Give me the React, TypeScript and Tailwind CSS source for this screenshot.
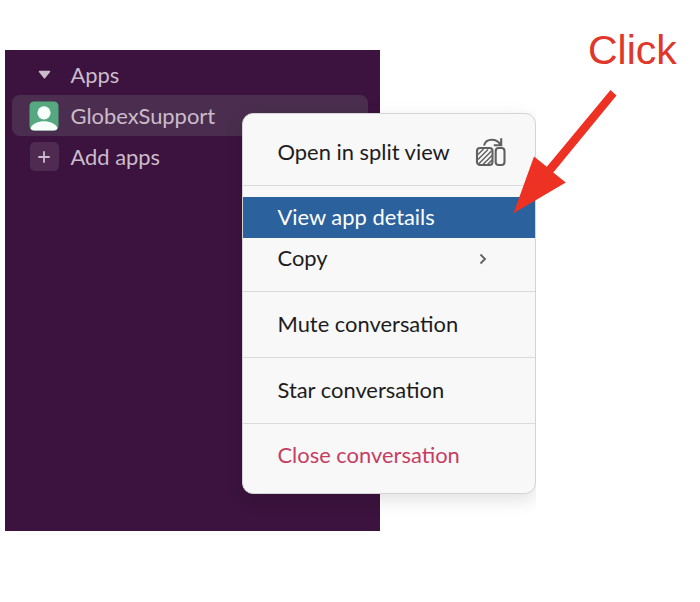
import type { ReactNode } from "react";

function SidebarRow({ icon, label, active = false }: { icon: ReactNode; label: string; active?: boolean }) {
  return (
    <div className={`mr-[12px] ml-[7px] flex h-[41px] items-center rounded-[8px] pl-[17px] ${active ? "bg-[#4b2e4f]" : ""}`}>
      <span className="flex size-[30px] shrink-0 items-center justify-center">{icon}</span>
      <span className="ml-[11.500px] whitespace-nowrap">{label}</span>
    </div>
  );
}

function Avatar() {
  return (
    <svg className="size-[30px]" viewBox="0 0 30 30">
      <rect x="0.5" y="0.5" width="29" height="29" rx="4.5" fill="#55a880" />
      <circle cx="15" cy="11.8" r="6.6" fill="#f7fffb" />
      <path d="M1.5 27.2C3.5 22.5 9 20.3 15 20.3s11.500 2.200 13.500 6.900Q27.700 29.500 25 29.500H5Q2.300 29.500 1.500 27.200Z" fill="#f7fffb" />
    </svg>
  );
}

function SplitViewIcon() {
  return (
    <svg className="h-[30px] w-[31px]" viewBox="0 0 31 30" fill="none" stroke="#616061" strokeWidth="2.1">
      <rect x="2" y="11" width="15.500" height="17" rx="3" />
      <rect x="20.700" y="11" width="8.800" height="17" rx="3" />
      <path d="M3 17.500l5.500-5.500M3 22.500L13 12.500M3.500 27L16.500 14M8 27.500L17 18.500M12.500 27.500L17 23" strokeWidth="1.500" />
      <path d="M9 8.500C10 5 13 2.800 16.700 2.800c4 0 6.800 1.800 8.800 4.700M26.200 1.200v7.100h-7.400" />
    </svg>
  );
}

function MenuItem({ label, icon, className = "" }: { label: string; icon?: ReactNode; className?: string }) {
  return (
    <div className={`flex h-[41px] items-center justify-between pb-px pl-[34.500px] ${className}`}>
      <span className="whitespace-nowrap">{label}</span>
      {icon}
    </div>
  );
}

function Divider() {
  return <div className="mt-[12px] mb-[11.700px] h-px bg-[#dadada]" />;
}

export default function App() {
  return (
    <div className="relative h-[602px] w-[700px] overflow-hidden bg-white pt-[50px] pl-[5px] font-['Lato',sans-serif] text-[21.900px] leading-[28px]">
      <div className="relative h-[481px] w-[531px] overflow-hidden">
        <div className="h-full w-[375px] bg-[#3b133e] pt-[4px] text-[#cbbccb]">
          <SidebarRow
            label="Apps"
            icon={
              <svg className="h-[9px] w-[13px]" viewBox="0 0 13 9">
                <path d="M1.500 1.500h10L6.500 7.800Z" fill="#cbbccb" stroke="#cbbccb" strokeWidth="1.500" strokeLinejoin="round" />
              </svg>
            }
          />
          <SidebarRow label="GlobexSupport" active icon={<Avatar />} />
          <SidebarRow
            label="Add apps"
            icon={
              <span className="flex size-[29px] items-center justify-center rounded-[5px] bg-[#4f2b52]">
                <svg className="size-[12px]" viewBox="0 0 12 12" stroke="#cbbccb" strokeWidth="1.800" strokeLinecap="round">
                  <path d="M6 1v10M1 6h10" />
                </svg>
              </span>
            }
          />
        </div>
        <div className="absolute top-[63px] left-[237px] h-[381px] w-[294px] rounded-[11px] border border-[#d5d4d5] bg-[#f8f8f8] pt-[17.500px] text-[#1d1c1d] shadow-[0_6px_18px_rgba(0,0,0,0.12)]">
          <MenuItem label="Open in split view" icon={<span className="mr-[29px]"><SplitViewIcon /></span>} />
          <Divider />
          <MenuItem label="View app details" className="bg-[#2b629e] text-white" />
          <MenuItem
            label="Copy"
            icon={
              <svg className="mt-px mr-[48px] h-[12px] w-[8px]" viewBox="0 0 8 12" fill="none" stroke="#616061" strokeWidth="1.800">
                <path d="M1.500 1.500L6 6l-4.500 4.500" />
              </svg>
            }
          />
          <Divider />
          <MenuItem label="Mute conversation" />
          <Divider />
          <MenuItem label="Star conversation" />
          <Divider />
          <MenuItem label="Close conversation" className="text-[#c63d63]" />
        </div>
      </div>
      <span className="absolute top-[26px] left-[588px] font-['Liberation_Sans',Arial,sans-serif] text-[41px] leading-[48px] text-[#e0372a]">Click</span>
      <svg className="absolute top-[88px] left-[510px] h-[130px] w-[112px]" viewBox="510 88 112 130">
        <path d="M610.500 90L616.500 95.500L553.300 172.500L565.800 182.500L513.500 213.300L534 156.500L546.800 166.800Z" fill="#ed3223" />
      </svg>
    </div>
  );
}
